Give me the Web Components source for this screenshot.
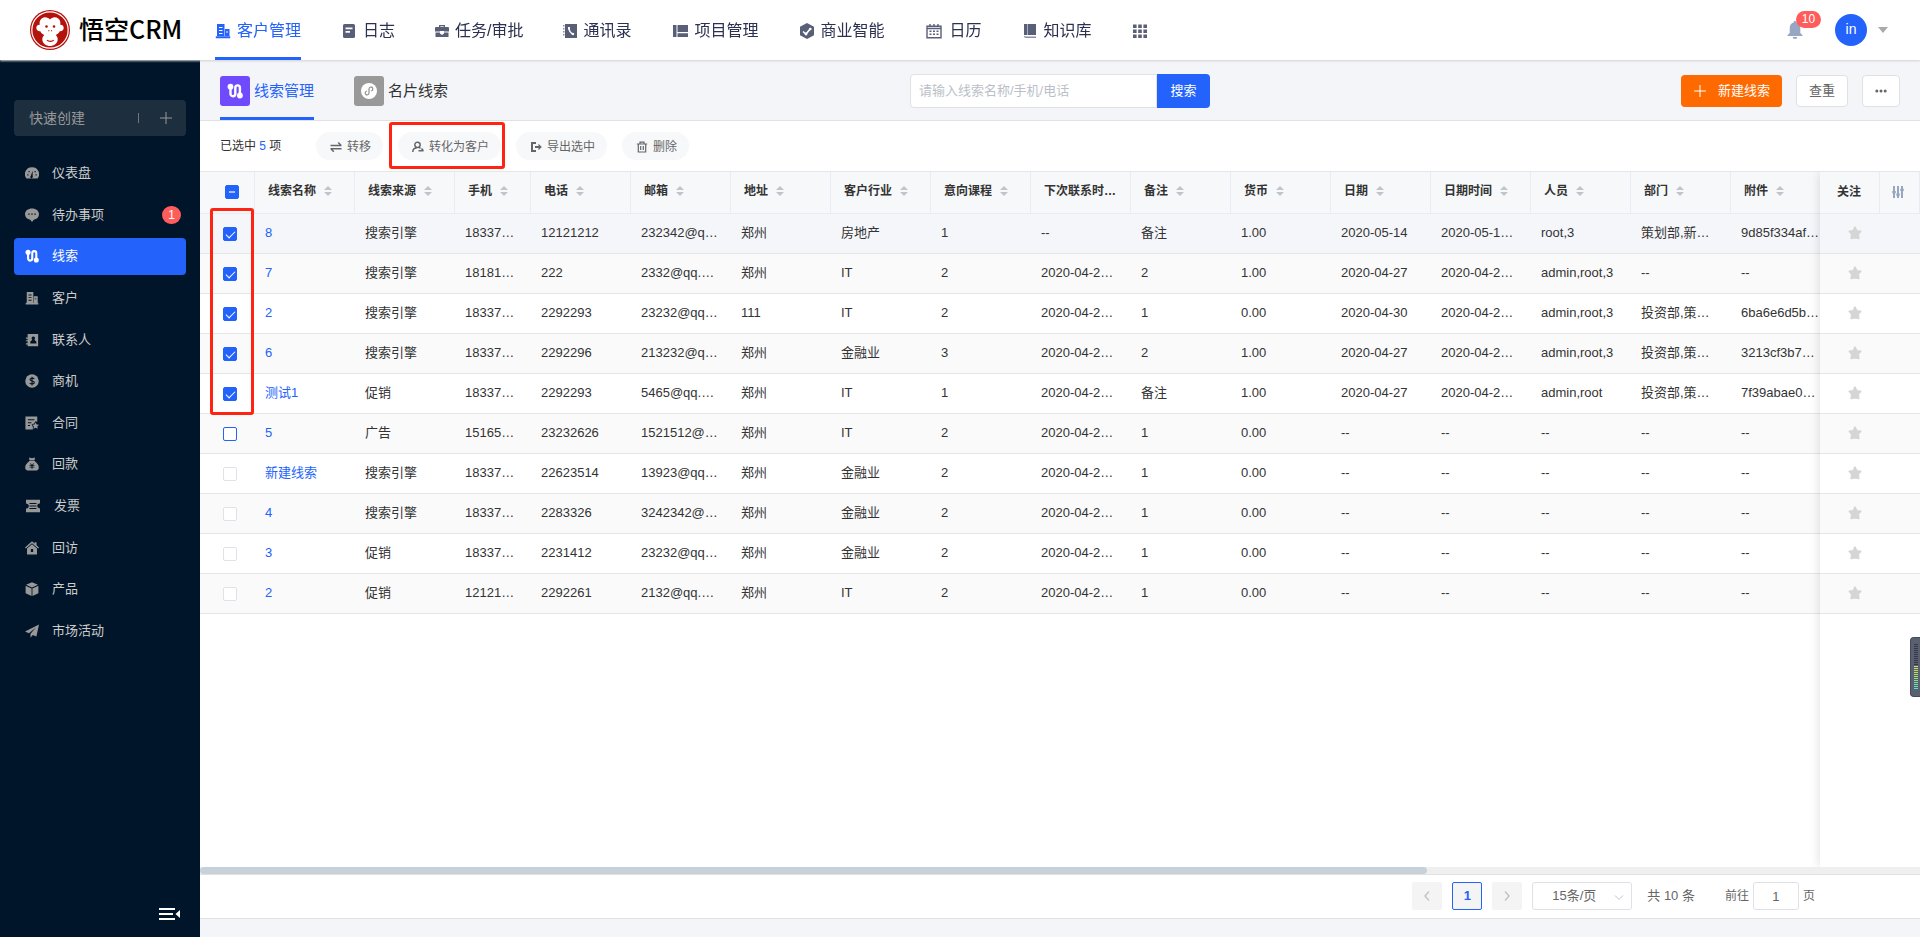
<!DOCTYPE html>
<html lang="zh-CN">
<head>
<meta charset="utf-8">
<meta name="viewport" content="width=device-width, initial-scale=1">
<title>悟空CRM</title>
<style>
body{margin:0;font-family:"Liberation Sans","Noto Sans CJK SC",sans-serif;font-size:13px;color:#333;background:#f4f5f9}
</style>
</head>
<body>
<crm-app></crm-app>
<script>
const BASE = '*{box-sizing:border-box}a{text-decoration:none;color:inherit}button,input,select{font:inherit;margin:0}[hidden]{display:none}';
const define = (name, css, html, setup) => {
  const tpl = document.createElement('template');
  tpl.innerHTML = '<style>' + BASE + css + '</style>' + html;
  customElements.define(name, class extends HTMLElement {
    connectedCallback() {
      if (this.shadowRoot) return;
      const root = this.attachShadow({ mode: 'open' });
      root.append(tpl.content.cloneNode(true));
      if (setup) setup.call(this, root);
    }
  });
};

/* Icons: [width, height, markup] */
const F = 'fill="currentColor"', E = 'fill="currentColor" fill-rule="evenodd"', S = 'fill="none" stroke="currentColor"';
const ICONS = {
  customer: [16, 16, `<path ${E} d="M2 1h7.500v12.500H2zM4 4v1h3.500V4zM4 7v1h3.500V7zM4 10v1h3.500v-1zM10 6h4.500v7.500H10zM11 8.500v1h2v-1zM.8 13.300h14.400V15.300H.8z"/>`],
  log: [16, 16, `<path ${E} d="M3.500 1h9A1.500 1.500 0 0 1 14 2.500v11a1.500 1.500 0 0 1-1.500 1.500h-9A1.500 1.500 0 0 1 2 13.500v-11A1.500 1.500 0 0 1 3.500 1zM4.500 4.500v1.700h7V4.500zM4.500 8v1.700h4.500V8z"/>`],
  task: [14, 16, `<path ${E} d="M4 4V2h6v2h3a1 1 0 0 1 1 1v3.500H9V8H5v.500H0V5a1 1 0 0 1 1-1zM5.300 4h3.400v-.800H5.300zM.500 9.500H5v1l2 1.500 2-1.500v-1h4.500V14h-13z"/>`],
  book: [14, 16, `<path ${F} d="M2 1h12v14H2z"/><path d="M6 4.300c-.2 3.500 1.500 6 4.800 7" fill="none" stroke="#fff" stroke-width="1.300"/><path d="M6 4v2.600M8.800 10.800l2.200.500" fill="none" stroke="#fff" stroke-width="2"/><path ${F} opacity=".7" d="M0 2h1.500v1.500H0zM0 5h1.500v1.500H0zM0 8h1.500v1.500H0zM0 11h1.500v1.500H0z"/>`],
  project: [17, 16, `<path ${F} d="M1 2h3.500v12H1zM5.500 2H16v7H5.500zM5.500 10.300H16V14H5.500z"/>`],
  bi: [16, 16, `<path ${F} d="M8 0l7 3.700v8.500L8 16l-7-3.800V3.700z"/><path d="M4 8.500l3 2.500 4.500-5.500" fill="none" stroke="#fff" stroke-width="1.600"/><circle cx="7" cy="11" r="1.400" fill="#fff"/><circle cx="11.300" cy="6" r="1.300" fill="#fff"/>`],
  calendar: [19, 16, `<path ${S} stroke-width="1.400" d="M2 3.200h14v11.500H2zM2 5.500h14M5 1v3M9 1v3M13 1v3"/><path ${F} d="M4.500 7.500h2v1.600h-2zM8 7.500h2v1.600H8zM11.500 7.500h2v1.600h-2zM4.500 10.500h2v1.600h-2zM8 10.500h2v1.600H8zM11.500 10.500h2v1.600h-2z"/>`],
  knowledge: [16, 16, `<path ${F} d="M2 1h3v11H2zM5.500 1H14v11H5.500z"/><path ${S} opacity=".7" stroke-width="1.400" d="M14 14.300H4A1.500 1.500 0 0 1 2.600 13"/>`],
  apps: [16, 16, `<path ${F} d="M1 1.500h3.600V5H1zM6.200 1.500h3.600V5H6.200zM11.400 1.500H15V5h-3.600zM1 6.500h3.600V10H1zM6.200 6.500h3.600V10H6.200zM11.400 6.500H15V10h-3.600zM1 11.500h3.600V15H1zM6.200 11.500h3.600V15H6.200zM11.400 11.500H15V15h-3.600z"/>`],
  bell: [16, 18, `<path ${F} d="M8 0a1.300 1.300 0 0 1 1.300 1.500C12 2.200 13.300 4.500 13.300 7v5l2.200 2.300v.700H.5v-.700L2.700 12V7C2.700 4.500 4 2.200 6.700 1.500A1.300 1.300 0 0 1 8 0zM5.700 16h4.600a2.300 2 0 0 1-4.600 0z"/>`],
  lead: [16, 16, `<path ${S} stroke-width="2.400" d="M3.500 4v6.700a2.400 2.600 0 0 0 4.800 0V4.800a2.300 2.400 0 0 1 4.600 0V12"/><circle ${F} cx="3.500" cy="3.700" r="2.900"/><circle ${F} cx="12.900" cy="12.500" r="2.900"/>`],
  card: [18, 18, `<circle ${F} cx="9" cy="9" r="8"/><path d="M6.800 9.200a1.900 1.900 0 1 0 2.200 1.900V6.900a1.900 1.900 0 1 1 2.200 1.900" fill="none" stroke="#999" stroke-width="1.300"/>`],
  dash: [16, 16, `<path ${E} d="M8 1.500a7.800 7.800 0 0 1 6.900 12l-.600.800H1.700l-.600-.800A7.800 7.800 0 0 1 8 1.500zM8.700 5.500L6.600 11.500a1.400 1.400 0 1 0 2.200.600zM2.700 9.500v1.300h1.300V9.500zM12 9.500v1.300h1.300V9.500zM4 5.800v1.300h1.300V5.800zM10.900 5.800v1.300h1.300V5.800z"/>`],
  todo: [16, 16, `<path ${E} d="M8 .5c4.700 0 8 2.700 8 6.500 0 3.500-2.500 5.700-6 6.300L8 16l-2-2.700C2.500 12.700 0 10.500 0 7 0 3.200 3.300.5 8 .5zM3.700 6.200v1.600h1.600V6.200zM7.200 6.200v1.600h1.600V6.200zM10.700 6.200v1.600h1.600V6.200z"/>`],
  contact: [16, 16, `<path ${E} d="M3 1h12v14H3v-2H1v-1.300h2V9.500H1V8.200h2V6.500H1V5.200h2zM9.500 4a2 2 0 0 0-1.200 3.600L6 10v2h7v-2l-2.300-2.400A2 2 0 0 0 9.500 4z"/>`],
  money: [16, 16, `<circle ${F} cx="8" cy="8" r="7.700"/><path d="M10.600 5.600C9.500 4.400 5.800 4.400 5.800 6.400S10.600 7.700 10.600 9.700s-4 2-5.200.600M8 3v10" fill="none" stroke="#001529" stroke-width="1.300"/>`],
  contract: [16, 16, `<path ${E} d="M.5.500h13.500v6.200L12 6 10.500 8.500 7.500 9.800l1.500 2.700V15.500H.5zM3.300 3.700v1.200h7.500V3.700zM3.300 7v1.200h4V7zM3.300 10.300v1.200h2.500v-1.200z"/><path ${F} d="M12 7.300l1.300 2.300 2.700.400-1.900 2 .400 2.700-2.400-1.200-2.400 1.200.400-2.700L8.300 10l2.600-.400z"/>`],
  refund: [16, 16, `<path ${E} d="M4.500.5L8 1.500l3.500-1L10.800 4h-5.600zM5 4.700h6c2.500 2 4.800 4.600 4.800 7.200 0 2.400-1.800 3.600-3.300 3.600h-9C2 15.500.2 14.300.2 11.900.2 9.300 2.500 6.700 5 4.700zM5.600 7.300l1.400 2H5.200v1h2.200v.700H5.200v1h2.200v1.300h1.200V12h2.200v-1H8.600v-.700h2.200v-1H9l1.400-2H9.200L8 9 6.800 7.300z"/>`],
  invoice: [18, 16, `<path ${E} d="M1 .8h16v4.400a2.500 2.500 0 0 0-1 5.300l1 .300v4.400H1v-4.400a2.500 2.500 0 0 0 1-5.300L1 5.200zM5 4.700v1.100h8V4.700zM5 7.500v1.100h8V7.500zM5 10.300v1.100h8v-1.100z"/>`],
  visit: [16, 16, `<path ${F} d="M8 .3l3 2.600V1.500h2.200v3.300L16 7.300l-1 1.300-7-6-7 6L0 7.300z"/><path ${E} d="M8 3.700l5.700 4.900v6.900H2.300V8.600zM6.700 9v3.700h2.600V9z"/>`],
  product: [16, 16, `<path ${F} d="M8 .2l6.800 3L8 6.300 1.200 3.200zM.7 4.200l6.800 3.100V16L.7 12.800zM15.300 4.200L8.500 7.300V16l6.800-3.200z"/>`],
  market: [16, 16, `<path ${F} d="M16 .5L0 8.500l4.500 2L12.500 4 6.300 11v4.700l2.600-3.200 4.100 1.900z"/>`],
  collapse: [22, 14, `<path ${F} d="M0 1h16v2H0zM0 6h14v2H0zM0 11h16v2H0zM21 3v8l-4.500-4z"/>`],
  plus: [12, 12, `<path ${S} d="M6 0v12M0 6h12"/>`],
  transfer: [12, 12, `<path ${S} stroke-width="1.500" d="M.5 4.500h11M8.200 1.500l3 3M11.500 7.800H.5M3.800 10.800l-3-3"/>`],
  convert: [12, 12, `<path ${S} stroke-width="1.500" d="M.8 11c0-2.600 1.500-4 3.700-4M6 1.200a2.700 2.700 0 1 0 0 5.300 2.700 2.700 0 0 0 0-5.300M7.500 6.500l1 1M6.500 9.700h5M9.500 7.500l2 2.200"/>`],
  export: [12, 12, `<path ${S} stroke-width="2" d="M6 2H2v8h4"/><path ${F} d="M5 5h3.500V2.800L11.800 6 8.500 9.200V7H5z"/>`],
  trash: [12, 12, `<path ${S} stroke-width="1.200" d="M.8 3h10.400M4 3V1.200h4V3M2.300 3v8h7.400V3M4.700 5v4M7.300 5v4"/>`],
  dots: [12, 12, `<circle ${F} cx="1.800" cy="6" r="1.500"/><circle ${F} cx="6" cy="6" r="1.500"/><circle ${F} cx="10.200" cy="6" r="1.500"/>`],
  star: [14, 14, `<path fill="currentColor" stroke="currentColor" stroke-width="1.800" stroke-linejoin="round" d="M7 1.300l1.700 3.500 3.900.600-2.500 2.700.600 4.200L7 11.500 3.300 12.300l.600-4.200L1.400 5.400l3.900-.600z"/>`],
  sliders: [12, 12, `<path ${S} stroke-width="2" d="M2 0v12M6 0v12M10 0v12"/><path ${F} d="M.3 5h3.500v2.200H.3zM4.300 7.500h3.500v2.200H4.300zM8.300 2.800h3.500V5H8.300z"/>`],
  sort: [8, 10, `<path fill="#c0c4cc" d="M4 0l4 4H0zM4 10L0 6h8z"/>`],
  caret: [10, 6, `<path ${F} d="M0 0h10L5 6z"/>`],
  left: [12, 12, `<path ${S} stroke-width="1.500" d="M8 1.500L4 6l4 4.500"/>`],
  right: [12, 12, `<path ${S} stroke-width="1.500" d="M4 1.500L8 6l-4 4.500"/>`],
  down: [12, 12, `<path ${S} d="M2 4.500l4 4 4-4"/>`],
  logo: [40, 40, `<circle cx="20" cy="20" r="20" fill="#b4120c"/><circle cx="20" cy="20" r="18.200" fill="none" stroke="#fff" stroke-width="1.200"/><path fill="#fff" d="M20 9.500c2-2.500 5.500-3.300 8.300-1 1.800 1.500 2.500 4 1.900 6.300 1.800-.300 3.500 1 3.500 3 0 2.300-1.700 3.800-4 3.500-.700 1.800-2.200 3-3.900 3.700 1.500 1.500 2.200 3.400 1.800 5.500-.7 3.300-4 5.500-7.600 5.500s-6.900-2.200-7.600-5.500c-.400-2.100.3-4 1.800-5.500-1.700-.700-3.200-1.900-3.900-3.700-2.300.300-4-1.200-4-3.500 0-2 1.700-3.300 3.500-3-.600-2.300.1-4.800 1.900-6.300 2.800-2.300 6.300-1.500 8.300 1z"/><circle cx="16.500" cy="16.500" r="1.300" fill="#b4120c"/><circle cx="24" cy="16.500" r="1.300" fill="#b4120c"/><path d="M18.500 20.500l.800.600M22 20.500l-.800.600M17 30c1.300 1.800 5.500 1.800 6.800 0" stroke="#b4120c" stroke-width="1.200" fill="none"/>`]
};
const icon = n => `<crm-icon name="${n}"></crm-icon>`;
define('crm-icon', ':host{display:inline-flex;flex:none}svg{display:block}', '', function (root) {
  const [w, h, body] = ICONS[this.getAttribute('name')];
  const s = this.getAttribute('size');
  const k = s ? s / h : 1;
  const holder = document.createElement('template');
  holder.innerHTML = `<svg aria-hidden="true" width="${Math.round(w * k)}" height="${Math.round(h * k)}" viewBox="0 0 ${w} ${h}">${body}</svg>`;
  root.append(holder.content);
});

define('crm-nav-item', `
:host{display:block;height:60px;color:#2b3150}
a{display:flex;align-items:center;gap:6px;height:100%;font-size:16px;line-height:24px;border-bottom:3px solid transparent;padding-top:4px;white-space:nowrap}
crm-icon{color:#5a5f78}
:host([active]) a{color:#2362fb;border-color:#2362fb}
:host([active]) crm-icon{color:#2362fb}`,
`<a href="#"><slot></slot></a>`, function (root) {
  root.querySelector('a').insertAdjacentHTML('afterbegin', icon(this.getAttribute('icon')));
});

define('crm-header', `
:host{display:flex;align-items:center;height:60px;background:#fff;box-shadow:0 1px 2px #d0d0d0;position:relative;z-index:3}
.brand{display:flex;align-items:center;gap:9px;width:215px;padding-left:30px;font:500 25px/36px "Noto Sans CJK SC",sans-serif;color:#000}
.brand span{padding-bottom:4px}
nav{display:flex;gap:40px;flex:1}
.right{display:flex;align-items:center;padding:0 32px 0 0}
button{border:0;background:none;padding:0;display:flex;cursor:pointer}
.bell{position:relative;color:#98a6c2;margin-right:32px}
.count{position:absolute;left:9px;top:-10px;min-width:25px;height:17px;border-radius:9px;background:#ff5c5c;color:#fff;font-size:12px;line-height:17px;text-align:center}
.user{align-items:center;gap:11px;color:#aaa}
.avatar{width:32px;height:32px;border-radius:50%;background:#2362fb;color:#fff;font-size:14px;line-height:31px;text-align:center}`, `
<a class="brand" href="#">${icon('logo')}<span>悟空CRM</span></a>
<nav aria-label="主导航">
<crm-nav-item icon="customer" active>客户管理</crm-nav-item>
<crm-nav-item icon="log">日志</crm-nav-item>
<crm-nav-item icon="task">任务/审批</crm-nav-item>
<crm-nav-item icon="book">通讯录</crm-nav-item>
<crm-nav-item icon="project">项目管理</crm-nav-item>
<crm-nav-item icon="bi">商业智能</crm-nav-item>
<crm-nav-item icon="calendar">日历</crm-nav-item>
<crm-nav-item icon="knowledge">知识库</crm-nav-item>
<crm-nav-item icon="apps"></crm-nav-item>
</nav>
<div class="right">
<button class="bell" type="button" aria-label="通知">${icon('bell')}<span class="count">10</span></button>
<button class="user" type="button"><span class="avatar">in</span>${icon('caret')}</button>
</div>`);

define('crm-menu-item', `
:host{display:block;color:#ccc}
a{display:flex;align-items:center;height:37px;padding:0 5px 1px 11px;gap:13px;border-radius:4px;line-height:20px}
crm-icon{color:#999}
:host([active]) a{background:#2362fb;color:#fff}
:host([active]) crm-icon{color:#fff}
.badge{margin-left:auto;width:19px;height:18px;border-radius:9px;background:#ff5c5c;color:#fff;font-size:12px;line-height:18px;text-align:center}`,
`<a href="#"><slot></slot></a>`, function (root) {
  const a = root.querySelector('a');
  a.insertAdjacentHTML('afterbegin', `<crm-icon name="${this.getAttribute('icon')}" size="14"></crm-icon>`);
  const b = this.getAttribute('badge');
  if (b) a.insertAdjacentHTML('beforeend', `<span class="badge">${b}</span>`);
});

define('crm-sidebar', `
:host{display:flex;flex-direction:column;background:#001529;padding:40px 14px 16px}
.quick{display:flex;align-items:center;height:36px;border:0;border-radius:4px;background:#1d2f3f;color:#999;font-size:14px;line-height:20px;padding:0 14px 0 15px;cursor:pointer}
.sep{width:1px;height:10px;background:#777;margin:0 21px 0 auto}
nav{display:flex;flex-direction:column;justify-content:space-between;height:495px;margin-top:19px}
.fold{display:flex;margin:auto 5px 0 auto;border:0;background:none;padding:0;color:#fff;cursor:pointer}`, `
<button class="quick" type="button">快速创建<span class="sep"></span>${icon('plus')}</button>
<nav aria-label="侧边菜单">
<crm-menu-item icon="dash">仪表盘</crm-menu-item>
<crm-menu-item icon="todo" badge="1">待办事项</crm-menu-item>
<crm-menu-item icon="lead" active>线索</crm-menu-item>
<crm-menu-item icon="customer">客户</crm-menu-item>
<crm-menu-item icon="contact">联系人</crm-menu-item>
<crm-menu-item icon="money">商机</crm-menu-item>
<crm-menu-item icon="contract">合同</crm-menu-item>
<crm-menu-item icon="refund">回款</crm-menu-item>
<crm-menu-item icon="invoice">发票</crm-menu-item>
<crm-menu-item icon="visit">回访</crm-menu-item>
<crm-menu-item icon="product">产品</crm-menu-item>
<crm-menu-item icon="market">市场活动</crm-menu-item>
</nav>
<button class="fold" type="button" aria-label="收起菜单">${icon('collapse')}</button>`);

define('crm-tabs', `
:host{display:grid;grid-template-columns:690px auto 1fr;height:60px;padding:0 20px;border-bottom:1px solid #e1e1e1;align-items:center}
.tabs{display:flex;gap:40px;align-self:stretch}
.tab{display:flex;align-items:center;gap:4px;font-size:15px;line-height:22px;border-bottom:3px solid transparent;border-top:3px solid transparent}
.tab.on{color:#2362fb;border-bottom-color:#2362fb}
.pic{display:grid;place-items:center;width:30px;height:30px;border-radius:3px;background:#999;color:#fff}
.on .pic{background:#704afd}
button{border:1px solid #e1e1e1;background:#fff;color:#666;height:32px;border-radius:4px;padding:0 12px;cursor:pointer;line-height:20px}
form{display:flex;margin:0}
input{width:247px;height:34px;border:1px solid #e1e1e1;border-radius:4px 0 0 4px;padding:0 8px;outline:0;background:#fff}
input::placeholder{color:#bbbfc7;opacity:1}
form button{height:34px;width:53px;border:0;background:#2362fb;color:#fff;border-radius:0 4px 4px 0}
.acts{display:flex;gap:14px;justify-content:flex-end}
.new{display:flex;align-items:center;gap:12px;background:#ff6a00;border:0;color:#fff;padding:0 12px 0 13px}
.acts crm-icon{vertical-align:middle}`, `
<div class="tabs">
<a class="tab on" href="#"><span class="pic">${icon('lead')}</span>线索管理</a>
<a class="tab" href="#"><span class="pic">${icon('card')}</span>名片线索</a>
</div>
<form><input type="text" aria-label="搜索线索" placeholder="请输入线索名称/手机/电话"><button type="button">搜索</button></form>
<div class="acts">
<button class="new" type="button">${icon('plus')}新建线索</button>
<button type="button">查重</button>
<button type="button" aria-label="更多">${icon('dots')}</button>
</div>`);

define('crm-pill', `
:host{display:block;position:relative}
button{display:flex;align-items:center;gap:5px;height:28px;padding:2px 12px 0 14px;border:0;border-radius:14px;background:#f6f8fa;color:#666;font-size:12px;line-height:18px;cursor:pointer}
:host([marked])::after{content:"";position:absolute;inset:-10px -4px -9px -9px;border:3px solid #ff2412;border-radius:3px;z-index:2}`,
`<button type="button"><slot></slot></button>`, function (root) {
  root.querySelector('button').insertAdjacentHTML('afterbegin', icon(this.getAttribute('icon')));
});

define('crm-toolbar', `
:host{display:flex;align-items:center;gap:15px;height:50px;padding:0 20px;background:#fff;font-size:12px;line-height:18px}
.sel{width:81px;white-space:nowrap}b{font-weight:400;color:#2362fb}`, `
<span class="sel">已选中 <b>5</b> 项</span>
<crm-pill icon="transfer">转移</crm-pill>
<crm-pill icon="convert" marked>转化为客户</crm-pill>
<crm-pill icon="export">导出选中</crm-pill>
<crm-pill icon="trash">删除</crm-pill>`);

const COLS = ['线索名称','线索来源','手机','电话','邮箱','地址','客户行业','意向课程','下次联系时…','备注','货币','日期','日期时间','人员','部门','附件'];
const ROWS = [
  ['8','搜索引擎','18337…','12121212','232342@q…','郑州','房地产','1','--','备注','1.00','2020-05-14','2020-05-1…','root,3','策划部,新…','9d85f334af…'],
  ['7','搜索引擎','18181…','222','2332@qq.…','郑州','IT','2','2020-04-2…','2','1.00','2020-04-27','2020-04-2…','admin,root,3','--','--'],
  ['2','搜索引擎','18337…','2292293','23232@qq…','111','IT','2','2020-04-2…','1','0.00','2020-04-30','2020-04-2…','admin,root,3','投资部,策…','6ba6e6d5b…'],
  ['6','搜索引擎','18337…','2292296','213232@q…','郑州','金融业','3','2020-04-2…','2','1.00','2020-04-27','2020-04-2…','admin,root,3','投资部,策…','3213cf3b7…'],
  ['测试1','促销','18337…','2292293','5465@qq.…','郑州','IT','1','2020-04-2…','备注','1.00','2020-04-27','2020-04-2…','admin,root','投资部,策…','7f39abae0…'],
  ['5','广告','15165…','23232626','1521512@…','郑州','IT','2','2020-04-2…','1','0.00','--','--','--','--','--'],
  ['新建线索','搜索引擎','18337…','22623514','13923@qq…','郑州','金融业','2','2020-04-2…','1','0.00','--','--','--','--','--'],
  ['4','搜索引擎','18337…','2283326','3242342@…','郑州','金融业','2','2020-04-2…','1','0.00','--','--','--','--','--'],
  ['3','促销','18337…','2231412','23232@qq…','郑州','金融业','2','2020-04-2…','1','0.00','--','--','--','--','--'],
  ['2','促销','12121…','2292261','2132@qq.…','郑州','IT','2','2020-04-2…','1','0.00','--','--','--','--','--']
];
define('crm-table', `
:host{display:flex;flex-direction:column;background:#fff;min-height:0;min-width:0}
.view{flex:1;position:relative;overflow:hidden;border-top:1px solid #e6e6e6}
table{table-layout:fixed;width:2411px;border-collapse:separate;border-spacing:0}
col.c0{width:55px}col.c{width:100px}col.m{width:76px}col.f1{width:60px}col.f2{width:40px}
th,td{padding:0 9px 2px 10px;text-align:left;white-space:nowrap;overflow:hidden;line-height:20px}
th{height:42px;padding:0 0 4px 13px;font-size:12px;font-weight:700;background:#f7f8fa;border-right:1px solid #e9ecf3;border-bottom:1px solid #e9ecf3}
th crm-icon{vertical-align:middle}th .t{margin-right:8px}
td{height:40px;background:#fff;border-bottom:1px solid #e6e6e6}
tr:nth-child(even) td{background:#fafafa}
tr.hover td{background:#f5f6fa}
td a{color:#2362fb}
td.pick{padding:0 0 0 23px}th.pick{padding:0 0 2px 25px}
.fix1,.fix2{position:sticky;z-index:2}.fix1{right:40px}.fix2{right:0}
td.fix1{padding-left:28px;color:#d5d5d5}th.fix1{padding:0 0 2px 17px}th.fix2{padding:0 0 2px 12px;color:#98a6c2}
.star{display:flex;border:0;background:none;padding:0;color:inherit;cursor:pointer}
.panel{position:absolute;right:0;top:0;bottom:0;width:100px;background:#fff;box-shadow:0 0 10px rgba(0,0,0,.14);z-index:1}
input{appearance:none;display:block;position:relative;width:14px;height:14px;border:1px solid #dfe2e8;border-radius:2px;background:#fff}
input:checked,input.part{background:#2362fb;border-color:#2362fb}
input.focus{border-color:#2362fb}
input:checked::after{content:"";position:absolute;left:4px;top:1px;width:4px;height:8px;border:solid #fff;border-width:0 1px 1px 0;transform:rotate(45deg)}
input.part::after{content:"";position:absolute;left:3px;top:5px;width:6px;height:2px;background:#a7c0fd}
.mark{position:absolute;left:10px;top:36px;width:44px;height:207px;border:3px solid #ff2412;border-radius:3px;z-index:2;pointer-events:none}
.bar{height:8px;background:#efefef;border-bottom:1px solid #e1e1e1}
.thumb{width:71.34%;height:7px;border-radius:4px;background:#c7d1da}`, `
<div class="view"><table><colgroup></colgroup><thead><tr></tr></thead><tbody></tbody></table><div class="panel"></div><div class="mark"></div></div>
<div class="bar"><div class="thumb"></div></div>`, function (root) {
  const $ = s => root.querySelector(s);
  $('colgroup').innerHTML = '<col class="c0">' + COLS.map((c, i) => `<col class="${i === 2 ? 'm' : 'c'}">`).join('') + '<col><col class="f1"><col class="f2">';
  $('thead tr').innerHTML = '<th class="pick"><input class="part" type="checkbox" aria-label="全选"></th>' +
    COLS.map((c, i) => `<th><span class="t">${c}</span>${i === 8 ? '' : icon('sort')}</th>`).join('') +
    `<th></th><th class="fix1">关注</th><th class="fix2">${icon('sliders')}</th>`;
  $('tbody').innerHTML = ROWS.map((r, i) => `<tr class="${i ? '' : 'hover'}"><td class="pick"><input type="checkbox" aria-label="选择 ${r[0]}"${i < 5 ? ' checked' : ''}${i === 5 ? ' class="focus"' : ''}></td>` +
    r.map((v, j) => `<td>${j ? v : `<a href="#">${v}</a>`}</td>`).join('') +
    `<td></td><td class="fix1"><button class="star" type="button" aria-label="关注">${icon('star')}</button></td><td class="fix2"></td></tr>`).join('');
});

define('crm-pager', `
:host{display:flex;align-items:center;justify-content:flex-end;gap:10px;height:44px;padding:0 105px 1px 20px;background:#fff;border-bottom:1px solid #e1e1e1;color:#666;line-height:20px}
button{width:30px;height:28px;border:0;border-radius:2px;background:#f4f4f5;color:#c0c4cc;padding:0;display:grid;place-items:center}
button.on{border:1px solid #2362fb;color:#2362fb;font-weight:700}
.pick{position:relative;color:#c0c4cc}
.pick crm-icon{position:absolute;right:7px;top:9px;pointer-events:none}
select{appearance:none;display:block;width:100px;height:28px;border:1px solid #dfe1e6;border-radius:3px;background:#fff;color:#666;padding:0 19px;outline:0}
.total{margin:0 20px 0 5px;white-space:nowrap;font-size:13px}
label{display:flex;align-items:center;gap:4px;font-size:12px}
input{width:46px;height:28px;border:1px solid #dfe1e6;border-radius:3px;text-align:center;color:#666;padding:0;font-size:13px}`, `
<button type="button" aria-label="上一页">${icon('left')}</button>
<button class="on" type="button">1</button>
<button type="button" aria-label="下一页">${icon('right')}</button>
<div class="pick"><select aria-label="每页条数"><option>15条/页</option></select>${icon('down')}</div>
<span class="total">共 10 条</span>
<label>前往<input type="text" value="1">页</label>`);

define('crm-meter', `
:host{display:grid;place-items:center end;width:10px;height:60px;background:#5a6072;border:1px solid #454a58;border-right:0;border-radius:4px 0 0 4px;padding-right:2px}
div{width:4px;height:46px;background:repeating-linear-gradient(transparent 0 1px,#5a6072 1px 2px),linear-gradient(#343842 48%,#d8e04a 48%,#8fe37a 75%,#4fe3d5)}`, '<div></div>');

define('crm-app', `
:host{display:grid;grid-template:60px 1fr / 200px minmax(0,1fr);min-height:100vh}
crm-header{grid-column:1/-1}
main{display:grid;grid-template-rows:auto auto 1fr auto;padding:1px 0 18px;min-width:0}
crm-meter{position:fixed;right:0;top:68%;z-index:5}`, `
<crm-header></crm-header>
<crm-sidebar></crm-sidebar>
<main><crm-tabs></crm-tabs><crm-toolbar></crm-toolbar><crm-table></crm-table><crm-pager></crm-pager></main>
<crm-meter></crm-meter>`);
</script>
</body>
</html>
